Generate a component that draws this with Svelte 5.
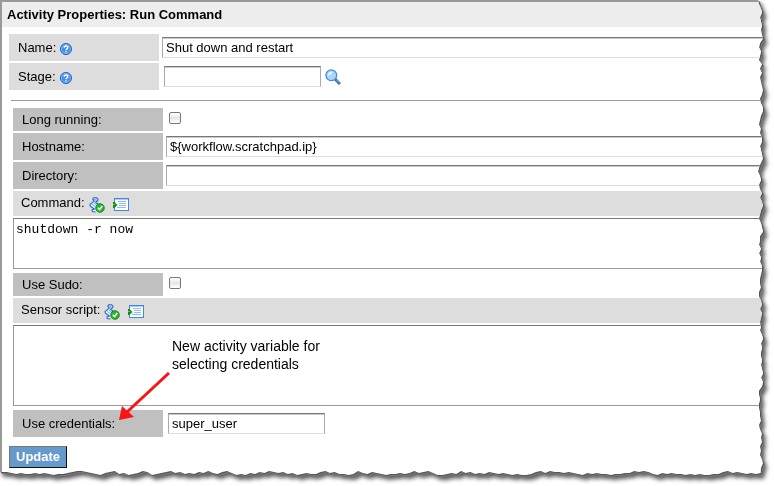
<script>
  let name = $state('Shut down and restart');
  let stage = $state('');
  let longRunning = $state(false);
  let hostname = $state('${workflow.scratchpad.ip}');
  let directory = $state('');
  let command = $state('shutdown -r now');
  let useSudo = $state(false);
  let sensorScript = $state('');
  let credentials = $state('super_user');

  // Depth of the tear along the right edge (top to bottom) and the bottom edge (right to left).
  const rightTear = [5, 4, 2, 1, 3, 2, 1, 2, 1, 0, 3, 4, 2, 3, 4, 1, 3, 1, 3, 2, 1, 0, 1, 3, 2, 0, 0, 2, 3, 4, 2, 3, 1, 1, 3, 2, 1, 0, 2, 4, 5, 3, 2, 4, 3, 1, 3, 1, 0, 2, 3, 4, 2, 1, 0, 3, 3, 4, 2, 4, 2, 3, 1, 1, 2, 3, 3, 2, 4, 4, 2, 1, 3, 1, 2, 3, 2, 3, 1, 0, 2, 1, 2, 2, 1, 2, 1, 0, 2, 0, 1, 4, 4, 3, 4, 4, 3, 3, 2, 4, 3, 1, 2, 1, 3, 2, 3, 1, 0, 2];
  const bottomTear = [2, 1, 2, 1, 2, 3, 2, 4, 3, 1, 1, 0, 0, 1, 0, 1, 0, 1, 1, 2, 1, 2, 0, 1, 3, 4, 3, 4, 2, 2, 1, 1, 0, 1, 1, 2, 1, 2, 0, 1, 2, 3, 2, 3, 3, 4, 2, 4, 3, 1, 0, 0, 1, 0, 1, 2, 1, 2, 3, 1, 2, 1, 3, 2, 4, 1, 2, 1, 0, 0, 2, 4, 3, 2, 4, 2, 1, 2, 1, 1, 0, 1, 2, 3, 1, 2, 4, 1, 0, 1, 1, 3, 2, 4, 3, 1, 1, 2, 1, 0, 2, 1, 3, 2, 3, 4, 2, 3, 1, 2, 0, 1, 0, 2, 4, 3, 1, 2, 4, 2, 3, 1, 2, 1, 3, 2, 4, 3, 2, 1, 0, 3, 4, 2, 1, 0, 2, 1, 4, 3, 2, 0, 1, 2, 3, 4, 4, 3, 2, 1, 1, 0, 1, 2, 1, 2, 1, 1, 2, 1, 2, 3];

  const tear = [
    '0 0',
    ...rightTear.map((d, i) => `calc(100% - ${d}px) ${((i / rightTear.length) * 99.4).toFixed(2)}%`),
    ...bottomTear.map((d, i) => `${(99.7 - (i / bottomTear.length) * 99.4).toFixed(2)}% calc(100% - ${d}px)`),
    '0 calc(100% - 3px)'
  ].join(', ');
</script>

{#snippet help()}
  <svg class="help" viewBox="0 0 12 12" width="12" height="12" aria-hidden="true">
    <circle cx="6" cy="6" r="5.5" fill="#2f7de0" stroke="#1d5dc0" />
    <circle cx="6" cy="6" r="4.5" fill="#3f8fe8" stroke="#a5d2ff" stroke-width=".7" />
    <path d="M4.2 4.8C4.2 2.4 8 2.5 7.8 4.6C7.7 5.9 6 5.8 6 7.3" fill="none" stroke="#fff" stroke-width="1.4" />
    <rect x="5.3" y="8.2" width="1.4" height="1.3" fill="#fff" />
  </svg>
{/snippet}

{#snippet tools(target)}
  <button type="button" class="icon" aria-label={`Check ${target}`}>
    <svg viewBox="0 0 16 16" width="16" height="16">
      <path d="M5 4.2L1 7.4L1.6 9L6.2 13.2L9.6 14L10.5 8.6L6.4 5.4Z" fill="#e4f1ff" />
      <path d="M4.6 .8H7.6L9 2.2L8.6 4L6.6 5M4.6 .8L3.8 2.2L5.2 4.2L1 7.4L1.4 9.2L5.6 12.2M6.4 5.2L10.2 8" fill="none" stroke="#2763cf" stroke-width="1.1" />
      <path d="M4.8 2L8 3.6M3.2 7.2L6.4 9.8M5 6L8 8.4" fill="none" stroke="#6aa5f2" />
      <path d="M5.6 12.2L3 12.8L3.4 14.6L6.6 15" fill="#fff" stroke="#2763cf" stroke-width="1.1" />
      <circle cx="11" cy="11" r="4.3" fill="#2eb52f" stroke="#16851e" stroke-width=".9" />
      <path d="M8.8 10.8L10.5 12.7L13.3 9" fill="none" stroke="#fff" stroke-width="1.4" />
    </svg>
  </button>
  <button type="button" class="icon" aria-label={`Insert variable into ${target}`}>
    <svg viewBox="0 0 16 16" width="16" height="16">
      <rect x="1.5" y="1.5" width="14" height="12" fill="#fff" stroke="#4384e6" />
      <path d="M2 2.5H15" stroke="#a9ccfa" />
      <path d="M5 4.5H13M6 6.5H13M6 8.5H13M4 10.5H13" stroke="#8fbaf3" />
      <path d="M0 5H1.5L4.5 8L1.5 11H0Z" fill="#168a20" />
      <path d="M0 7.5H2" stroke="#5ed060" />
    </svg>
  </button>
{/snippet}

<main class="shadow">
  <form class="sheet" style:clip-path={`polygon(${tear})`} onsubmit={(e) => e.preventDefault()}>
    <h1>Activity Properties: Run Command</h1>

    <div class="general">
      <div class="row">
        <label class="cell" for="name">Name: {@render help()}</label>
        <input class="text wide" id="name" type="text" bind:value={name} />
      </div>
      <div class="row stage">
        <label class="cell" for="stage">Stage: {@render help()}</label>
        <input class="text" id="stage" type="text" bind:value={stage} />
        <button type="button" class="icon search" aria-label="Search stages">
          <svg viewBox="0 0 16 16" width="16" height="16">
            <path d="M10 10L15 15" stroke="#3b6fa6" stroke-width="3" />
            <path d="M11 10.5L14.5 14" stroke="#8dbbe8" stroke-width="1" />
            <circle cx="6.3" cy="6.3" r="5.4" fill="#a9d7fb" stroke="#4b8acb" stroke-width="1.2" />
            <path d="M3 6.5C3 3.5 5.5 2.5 7.5 3.3C6.5 5.5 5 6.5 3 6.5Z" fill="#e9f7ff" />
          </svg>
        </button>
      </div>
    </div>

    <hr />

    <div class="details">
      <div class="row">
        <label class="cell short" for="long">Long running:</label>
        <input class="tick" id="long" type="checkbox" bind:checked={longRunning} />
      </div>
      <div class="row">
        <label class="cell" for="host">Hostname:</label>
        <input class="text wide" id="host" type="text" bind:value={hostname} />
      </div>
      <div class="row">
        <label class="cell" for="dir">Directory:</label>
        <input class="text wide" id="dir" type="text" bind:value={directory} />
      </div>
      <div class="band">
        <label for="command">Command:</label>
        {@render tools('command')}
      </div>
      <textarea id="command" class="command" spellcheck="false" bind:value={command}></textarea>
      <div class="row">
        <label class="cell short" for="sudo">Use Sudo:</label>
        <input class="tick" id="sudo" type="checkbox" bind:checked={useSudo} />
      </div>
      <div class="band">
        <label for="sensor">Sensor script:</label>
        {@render tools('sensor script')}
      </div>
      <div class="sensor">
        <textarea id="sensor" spellcheck="false" bind:value={sensorScript}></textarea>
        <p class="note">New activity variable for<br />selecting credentials</p>
        <svg class="arrow" viewBox="0 0 54 50" width="54" height="50" aria-hidden="true">
          <path d="M51 1L9 40" stroke="#fa1414" stroke-width="3" />
          <path d="M1 48L4 34L16 45Z" fill="#fa1414" />
        </svg>
      </div>
      <div class="row credentials">
        <label class="cell" for="cred">Use credentials:</label>
        <input class="text" id="cred" type="text" bind:value={credentials} />
      </div>
    </div>

    <button type="submit" class="update">Update</button>
  </form>
</main>

<style>
  :global(body) {
    margin: 0;
    background: #fff;
  }

  .shadow {
    padding: 0 11px 11px 0;
    filter: drop-shadow(1px 1px 0 #555) drop-shadow(1px 1px 0 #777) drop-shadow(2px 3px 2px rgba(0, 0, 0, 0.65));
  }

  .sheet {
    box-sizing: border-box;
    overflow: hidden;
    padding-bottom: 7px;
    border: solid #999;
    border-width: 2px 0 0 2px;
    background: #fff;
    color: #000;
    font: 13px/16px 'Liberation Sans', Arial, sans-serif;
  }

  h1 {
    margin: 0;
    padding: 5px 5px 4px;
    background: #ededed;
    font-size: 13px;
    line-height: 16px;
  }

  .general,
  .details {
    display: flex;
    flex-direction: column;
    gap: 2px;
  }

  .general {
    padding: 7px 0 10px 7px;
  }

  .details {
    padding-left: 11px;
  }

  .row {
    display: flex;
    align-items: center;
    gap: 3px;
  }

  .cell {
    box-sizing: border-box;
    display: flex;
    align-items: center;
    gap: 4px;
    flex: none;
    width: 150px;
    height: 27px;
    padding-left: 9px;
    background: #ddd;
  }

  .details .cell {
    background: #c0c0c0;
  }

  .cell.short {
    height: 23px;
  }

  .help {
    margin-top: 2px;
  }

  .stage,
  .credentials {
    gap: 5px;
  }

  .text {
    box-sizing: border-box;
    width: 157px;
    height: 21px;
    padding: 0 3px;
    border: 1px solid #aaa;
    border-top-color: #777;
    border-bottom-color: #ddd;
    border-radius: 0;
    background: #fff;
    box-shadow: inset 0 1px #ccc;
    color: inherit;
    font: inherit;
    outline: none;
  }

  .text.wide {
    flex: 1;
    min-width: 0;
    border-right: 0;
  }

  .tick {
    appearance: none;
    box-sizing: border-box;
    width: 12px;
    height: 12px;
    margin: 0 3px 3px;
    border: 1px solid #777;
    border-radius: 2px;
    background: linear-gradient(#fff, #e6e6e6 50%, #fff);
  }

  .tick:checked {
    background: #69c;
  }

  hr {
    height: 1px;
    margin: 0 0 7px 9px;
    border: 0;
    background: #999;
  }

  .band {
    display: flex;
    align-items: center;
    gap: 8px;
    height: 25px;
    padding-left: 8px;
    background: #ddd;
  }

  .band label {
    margin: 0 -4px 2px 0;
  }

  .icon {
    display: block;
    width: 16px;
    height: 16px;
    padding: 0;
    border: 0;
    background: none;
  }

  .icon svg {
    display: block;
  }

  .search {
    margin-left: -1px;
  }

  .band .icon {
    margin-top: 2px;
  }

  textarea {
    box-sizing: border-box;
    display: block;
    width: 100%;
    height: 81px;
    padding: 3px 2px;
    border: 1px solid #999;
    border-top-color: #777;
    border-right: 0;
    border-radius: 0;
    background: #fff;
    color: inherit;
    font: 13px/16px 'Liberation Mono', 'Courier New', monospace;
    resize: none;
    outline: none;
  }

  .command {
    height: 51px;
    margin-bottom: 2px;
  }

  .sensor {
    position: relative;
    margin-bottom: 2px;
  }

  .note {
    position: absolute;
    top: 12px;
    left: 159px;
    margin: 0;
    font-size: 14px;
    line-height: 18px;
    white-space: nowrap;
  }

  .arrow {
    position: absolute;
    z-index: 1;
    top: 47px;
    left: 105px;
  }

  .update {
    display: block;
    height: 22px;
    margin: 9px 0 0 7px;
    padding: 0 6px;
    border: 1px solid;
    border-color: #777 #111 #111 #777;
    border-radius: 0;
    background: #69c;
    color: #fff;
    font: bold 13px/16px 'Liberation Sans', Arial, sans-serif;
  }
</style>
